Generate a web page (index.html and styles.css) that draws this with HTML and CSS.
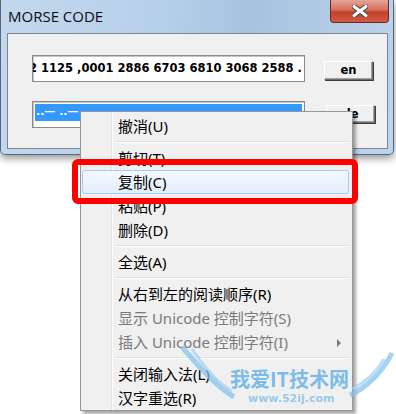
FILE: index.html
```html
<!DOCTYPE html>
<html>
<head>
    <title>MORSE CODE</title>
    <link rel="stylesheet" href="styles.css">
</head>
<body>
    <div class="window">
        <div class="titlebar">
            <span class="title">MORSE CODE</span>
            <div class="close">
                <svg width="16" height="12" viewBox="0 0 16 12">
                    <path d="M2 1.5 L14 10.5 M14 1.5 L2 10.5" stroke="#3f4348" stroke-width="5" stroke-linecap="round"/>
                    <path d="M2 1.5 L14 10.5 M14 1.5 L2 10.5" stroke="#fff" stroke-width="3" stroke-linecap="round"/>
                </svg>
            </div>
        </div>
        <div class="client">
            <div class="row">
                <div class="textbox"><span class="code">2 1125 ,0001 2886 6703 6810 3068 2588 .</span></div>
                <div class="button">en</div>
            </div>
            <div class="row second">
                <div class="textbox"><span class="selected">..— ..—</span></div>
                <div class="button">de</div>
            </div>
        </div>
    </div>

    <div class="menu">
        <div class="item">撤消(U)</div>
        <div class="sep"></div>
        <div class="item">剪切(T)</div>
        <div class="item hover">复制(C)</div>
        <div class="item">粘贴(P)</div>
        <div class="item">删除(D)</div>
        <div class="sep"></div>
        <div class="item">全选(A)</div>
        <div class="sep"></div>
        <div class="item">从右到左的阅读顺序(R)</div>
        <div class="item disabled">显示 Unicode 控制字符(S)</div>
        <div class="item disabled">插入 Unicode 控制字符(I)<span class="arrow"></span></div>
        <div class="sep"></div>
        <div class="item">关闭输入法(L)</div>
        <div class="item">汉字重选(R)</div>
    </div>

    <div class="mark"></div>

    <div class="watermark">
        <svg class="wings" width="220" height="60" viewBox="0 0 220 60">
            <path d="M4 2 C20 20 36 40 56 52" stroke="#7cc0ec" stroke-width="5" fill="none" opacity="0.7"/>
            <path d="M14 4 C26 22 40 38 54 46" stroke="#9fd0f0" stroke-width="3" fill="none" opacity="0.7"/>
            <path d="M214 8 C205 26 190 42 172 50" stroke="#7cc0ec" stroke-width="5" fill="none" opacity="0.7"/>
            <path d="M206 14 C198 28 186 38 174 44" stroke="#9fd0f0" stroke-width="3" fill="none" opacity="0.7"/>
        </svg>
        <div class="wm-title">我爱IT技术网</div>
        <div class="wm-url">www.52ij.com</div>
    </div>
</body>
</html>
```

FILE: styles.css
```css
body {
    margin: 0;
    width: 396px;
    height: 414px;
    overflow: hidden;
    background-color: #fff;
    font-family: "Noto Sans", "Noto Sans CJK SC", sans-serif;
}

.window {
    width: 394px;
    height: 155px;
    box-sizing: border-box;
    border: 1px solid #56687d;
    border-top: none;
    border-radius: 0 0 5px 5px;
    background: linear-gradient(100deg, #c3d8ee 0%, #b6cfe9 40%, #a7c2e0 60%, #bdd4ec 100%);
    box-shadow: 0 3px 8px rgba(0, 0, 0, 0.45);
    display: flex;
    flex-direction: column;
}

.titlebar {
    height: 33px;
    display: flex;
    align-items: flex-start;
}

.title {
    font-family: "Open Sans", sans-serif;
    font-size: 15px;
    color: #0a0a14;
    margin-left: 7px;
    margin-top: 6px;
    line-height: 20px;
}

.close {
    margin-left: auto;
    margin-right: 4px;
    width: 59px;
    height: 23px;
    box-sizing: border-box;
    border: 1px solid #6b2b22;
    border-top: none;
    border-radius: 0 0 4px 4px;
    background: linear-gradient(#e6a596 0%, #d7705c 45%, #c2412b 55%, #d25a43 100%);
    display: flex;
    justify-content: center;
    align-items: center;
}

.client {
    margin: 0 5px 5px 6px;
    flex: 1;
    border: 1px solid #7d8794;
    background-color: #f0f0f0;
    padding: 21px 0 0 24px;
    display: flex;
    flex-direction: column;
    gap: 19px;
}

.row {
    display: flex;
    align-items: flex-start;
}

.textbox {
    width: 273px;
    height: 27px;
    box-sizing: border-box;
    border: 1px solid #8a8a8a;
    box-shadow: inset 1px 1px 0 #c4c4c4;
    background-color: #fff;
    overflow: hidden;
    white-space: nowrap;
    padding: 2px 2px 0 2px;
}

.code {
    display: block;
    font-family: "DejaVu Sans", sans-serif;
    font-weight: bold;
    font-size: 11.5px;
    line-height: 20px;
    color: #000;
    margin-left: -6px;
}

.selected {
    display: block;
    height: 17px;
    background-color: #3399ff;
    color: #fff;
    font-family: "DejaVu Sans", sans-serif;
    font-weight: bold;
    font-size: 11px;
    line-height: 15px;
    padding-left: 1px;
}

.button {
    width: 49px;
    height: 19px;
    box-sizing: border-box;
    margin-left: 19px;
    margin-top: 6px;
    border: 1px solid;
    border-color: #fff #6e6e6e #6e6e6e #fff;
    box-shadow: 1px 1px 0 #3c3c3c, inset -1px -1px 0 #a0a0a0;
    background-color: #f0f0f0;
    font-family: "DejaVu Sans", sans-serif;
    font-weight: bold;
    font-size: 11.5px;
    line-height: 16px;
    text-align: center;
}

.second .button {
    margin-left: 21px;
    margin-top: 4px;
    height: 18px;
}

.menu {
    position: absolute;
    left: 80px;
    top: 111px;
    width: 273px;
    height: 300px;
    box-sizing: border-box;
    border: 1px solid #979797;
    padding: 2px 3px 0 1px;
    background: linear-gradient(90deg, #f0f0f0 0, #f0f0f0 30px, #e2e3e3 30px, #e2e3e3 31px, #fff 31px, #fff 32px, #f0f0f0 32px);
    box-shadow: 3px 3px 3px rgba(0, 0, 0, 0.35);
    font-size: 15px;
}

.item {
    position: relative;
    height: 24px;
    box-sizing: border-box;
    line-height: 22px;
    padding-left: 35px;
    color: #000;
    white-space: nowrap;
    border: 1px solid transparent;
    border-radius: 3px;
}

.item.hover {
    border-color: #a9cbf1;
    background: linear-gradient(#f3f8fd, #e3eefb);
}

.item.disabled {
    color: #7a7a7a;
}

.arrow {
    position: absolute;
    right: 7px;
    top: 8px;
    border-left: 4px solid #7a7a7a;
    border-top: 4px solid transparent;
    border-bottom: 4px solid transparent;
}

.sep {
    height: 8px;
    margin-left: 33px;
    margin-right: -1px;
    background: linear-gradient(#f0f0f0 0, #f0f0f0 3px, #e0e0e0 3px, #e0e0e0 4px, #fff 4px, #fff 5px, #f0f0f0 5px);
}

.mark {
    position: absolute;
    left: 72px;
    top: 159px;
    width: 286px;
    height: 45px;
    box-sizing: border-box;
    border: 6px solid #ff0000;
    border-radius: 6px;
}

.watermark {
    position: absolute;
    left: 178px;
    top: 345px;
    width: 220px;
    height: 62px;
    pointer-events: none;
}

.wings {
    position: absolute;
    left: 0;
    top: 0;
}

.wm-title {
    position: absolute;
    left: 52px;
    top: 24px;
    font-family: "Noto Sans CJK SC", sans-serif;
    font-weight: bold;
    font-size: 20px;
    line-height: 20px;
    color: rgba(70, 165, 230, 0.7);
}

.wm-url {
    position: absolute;
    left: 70px;
    top: 47px;
    font-family: "DejaVu Sans", sans-serif;
    font-weight: bold;
    font-size: 11px;
    line-height: 13px;
    color: rgba(90, 175, 235, 0.6);
}
```
